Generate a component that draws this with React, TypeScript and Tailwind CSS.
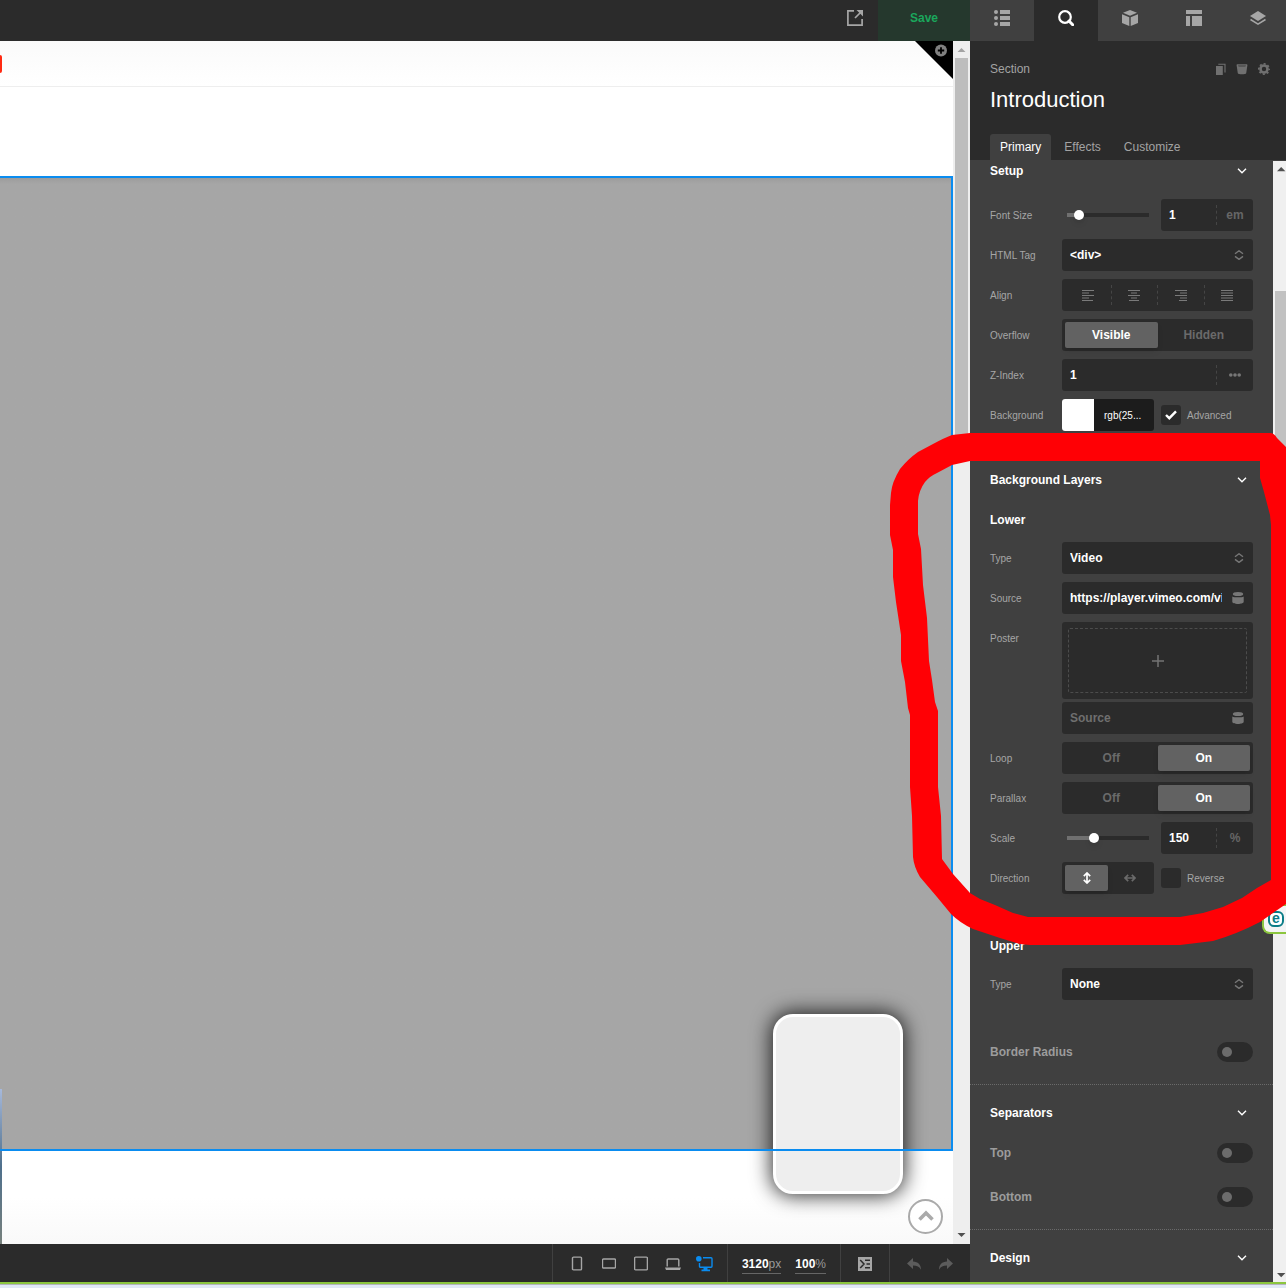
import React, { useState } from 'react';
import clsx from 'clsx';

interface RowProps {
  label: string;
  htmlFor?: string;
  children: React.ReactNode;
}

const Row: React.FC<RowProps> = ({ label, htmlFor, children }) => (
  <div className="flex items-start">
    <label htmlFor={htmlFor} className="flex h-8 w-[72px] shrink-0 items-center text-[10px] text-[#a6a6a6]">
      {label}
    </label>
    <div className="min-w-0 flex-1">{children}</div>
  </div>
);

const ChevronDown = () => (
  <svg width="10" height="6" viewBox="0 0 10 6" fill="none" stroke="#fff" strokeWidth="1.4">
    <path d="M1 0.8 5 4.8 9 0.8" />
  </svg>
);

const SectionHeader: React.FC<{ title: string }> = ({ title }) => (
  <button className="flex h-10 w-full items-center justify-between pr-[6px] text-xs font-bold text-white">
    <span>{title}</span>
    <ChevronDown />
  </button>
);

const SelectBox: React.FC<{ id: string; options: string[] }> = ({ id, options }) => (
  <div className="relative">
    <select id={id} className="h-8 w-full appearance-none rounded-[3px] bg-[#2b2b2b] pl-2 text-xs font-bold text-white outline-none">
      {options.map(option => (
        <option key={option}>{option}</option>
      ))}
    </select>
    <svg className="pointer-events-none absolute right-[9px] top-[11px]" width="10" height="10" viewBox="0 0 10 10" fill="none" stroke="#777" strokeWidth="1.4">
      <path d="M1 3.8 5 0.8 9 3.8M1 6.4 5 9.4 9 6.4" />
    </svg>
  </div>
);

interface SegmentedProps {
  name: string;
  options: React.ReactNode[];
  initial: number;
}

const Segmented: React.FC<SegmentedProps> = ({ name, options, initial }) => {
  const [active, setActive] = useState(initial);
  return (
    <div role="group" aria-label={name} className="flex h-8 rounded-[3px] bg-[#2b2b2b] p-[3px]">
      {options.map((option, index) => (
        <button
          key={index}
          aria-pressed={index === active}
          aria-label={typeof option === 'string' ? option : `${name} ${index + 1}`}
          onClick={() => setActive(index)}
          className={clsx(
            'flex flex-1 items-center justify-center rounded-[2px] text-xs font-bold',
            index === active ? 'bg-[#626262] text-white shadow-md' : 'text-[#6a6a6a]'
          )}
        >
          {option}
        </button>
      ))}
    </div>
  );
};

interface SliderFieldProps {
  id: string;
  initial: number;
  text: string;
  unit: string;
}

const SliderField: React.FC<SliderFieldProps> = ({ id, initial, text, unit }) => {
  const [value, setValue] = useState(initial);
  return (
    <div className="grid grid-cols-2 gap-[7px]">
      <div className="flex h-8 items-center px-[5px]">
        <input
          type="range"
          aria-label={`${id} slider`}
          value={value}
          onChange={e => setValue(Number(e.target.value))}
          className="h-1 w-full appearance-none outline-none [&::-webkit-slider-thumb]:size-[10px] [&::-webkit-slider-thumb]:appearance-none [&::-webkit-slider-thumb]:rounded-full [&::-webkit-slider-thumb]:bg-white [&::-webkit-slider-thumb]:shadow-md"
          style={{ background: `linear-gradient(to right, #707070 ${value}%, #2b2b2b ${value}%)` }}
        />
      </div>
      <div className="flex h-8 items-center rounded-[3px] bg-[#2b2b2b]">
        <input id={id} defaultValue={text} className="w-0 flex-1 pl-2 text-xs font-bold text-white outline-none" />
        <span className="flex h-5 w-[37px] items-center justify-center border-l border-dashed border-[#454545] text-xs font-bold text-[#666666]">
          {unit}
        </span>
      </div>
    </div>
  );
};

const DatabaseIcon = () => (
  <svg width="12" height="12" viewBox="0 0 12 12" fill="#777">
    <ellipse cx="6" cy="2" rx="5.2" ry="2" />
    <path d="M.3 4.4C2 5.6 10 5.6 11.7 4.4V9.8C11.7 12.7.3 12.7.3 9.8Z" />
  </svg>
);

const SourceInput: React.FC<{ id: string; value?: string }> = ({ id, value }) => (
  <div className="flex h-8 items-center rounded-[3px] bg-[#2b2b2b] px-2">
    <input
      id={id}
      aria-label="Source"
      defaultValue={value}
      placeholder="Source"
      className="w-0 flex-1 text-xs font-bold text-white outline-none placeholder:text-[#6f6f6f]"
    />
    <button aria-label="Dynamic content" className="ml-[10px] mr-[1px]">
      <DatabaseIcon />
    </button>
  </div>
);

const ToggleRow: React.FC<{ label: string; id: string }> = ({ label, id }) => (
  <div className="flex h-10 items-center justify-between text-xs font-bold text-[#9c9c9c]">
    <label htmlFor={id}>{label}</label>
    <input
      id={id}
      type="checkbox"
      role="switch"
      className="flex h-5 w-9 appearance-none items-center rounded-full bg-[#2b2b2b] px-[5px] before:size-[10px] before:rounded-full before:bg-[#6c6c6c] checked:justify-end"
    />
  </div>
);

const CheckField: React.FC<{ label: string; id: string; checked?: boolean }> = ({ label, id, checked }) => {
  const [on, setOn] = useState(!!checked);
  return (
    <div className="flex h-8 items-center gap-[6px] text-[10px] text-[#a6a6a6]">
      <div className="relative size-5">
        <input id={id} type="checkbox" checked={on} onChange={() => setOn(!on)} className="block size-5 appearance-none rounded-[3px] bg-[#2b2b2b]" />
        {on && (
          <svg className="pointer-events-none absolute left-1 top-[5px]" width="12" height="10" viewBox="0 0 12 10" fill="none" stroke="#fff" strokeWidth="2.4">
            <path d="M1 5 4.3 8.2 11 1.4" />
          </svg>
        )}
      </div>
      <label htmlFor={id}>{label}</label>
    </div>
  );
};

const alignLines = [
  ['Left', 'M0 .5H12M0 3H7M0 5.5H12M0 8H7M0 10.5H11'],
  ['Center', 'M0 .5H12M3 3H9M0 5.5H12M3 8H9M1 10.5H11'],
  ['Right', 'M0 .5H12M5 3H12M0 5.5H12M5 8H12M4 10.5H12'],
  ['Justify', 'M0 .5H12M0 3H12M0 5.5H12M0 8H12M0 10.5H12'],
];

const AlignGroup = () => (
  <div role="group" aria-label="Align" className="flex h-8 items-center rounded-[3px] bg-[#2b2b2b] px-[3px]">
    {alignLines.map(([name, d], index) => (
      <button
        key={name}
        aria-label={name}
        className={clsx('flex h-5 flex-1 items-center justify-center', index > 0 && 'border-l border-dashed border-[#454545]')}
      >
        <svg width="12" height="11" viewBox="0 0 12 11" stroke="#7a7a7a">
          <path d={d} />
        </svg>
      </button>
    ))}
  </div>
);

const panelTabs = [
  {
    name: 'Outline',
    icon: (
      <>
        <circle cx="2" cy="2" r="2" />
        <circle cx="2" cy="8" r="2" />
        <circle cx="2" cy="14" r="2" />
        <path d="M6 0h10v4H6zM6 6h10v4H6zM6 12h10v4H6z" />
      </>
    ),
  },
  {
    name: 'Inspector',
    icon: (
      <>
        <circle cx="7" cy="7" r="5.8" fill="none" stroke="currentColor" strokeWidth="2.2" />
        <path d="m11 11 3.7 3.7" stroke="currentColor" strokeWidth="3" strokeLinecap="round" />
      </>
    ),
  },
  {
    name: 'Elements',
    icon: <path d="M8 0 15 2.7 8 5.7 1 2.7ZM0 4.2 7.3 7.2V16L0 13ZM16 4.2 8.7 7.2V16L16 13Z" />,
  },
  {
    name: 'Layout',
    icon: <path d="M0 0h16v4H0zM0 6h4v10H0zM6 6h10v10H6z" />,
  },
  {
    name: 'Layers',
    icon: (
      <>
        <path d="M8 1 16 6 8 11 0 6Z" />
        <path d="M.5 9.5 8 14.2l7.5-4.7" fill="none" stroke="currentColor" strokeWidth="1.5" />
      </>
    ),
  },
];

const deviceIcons = [
  ['Phone', 'M3.5 1.1h7a1 1 0 0 1 1 1v10.8a1 1 0 0 1-1 1h-7a1 1 0 0 1-1-1V2.1a1 1 0 0 1 1-1Z'],
  ['Phone landscape', 'M1.5 3h11a1 1 0 0 1 1 1v7a1 1 0 0 1-1 1h-11a1 1 0 0 1-1-1V4a1 1 0 0 1 1-1Z'],
  ['Tablet', 'M1.6 1.1h10.8a1 1 0 0 1 1 1v10.8a1 1 0 0 1-1 1H1.6a1 1 0 0 1-1-1V2.1a1 1 0 0 1 1-1Z'],
];

const Inspector = () => (
  <aside className="flex w-[316px] shrink-0 flex-col overflow-hidden bg-[#404040]">
    <nav className="flex h-[41px] shrink-0 bg-[#404040]">
      {panelTabs.map((tab, index) => (
        <button
          key={tab.name}
          aria-label={tab.name}
          className={clsx('flex w-16 shrink-0 justify-center pt-[10px]', index === 1 ? 'bg-[#2b2b2b] text-white' : 'text-[#a6a6a6]')}
        >
          <svg width="16" height="16" viewBox="0 0 16 16" fill="currentColor">
            {tab.icon}
          </svg>
        </button>
      ))}
    </nav>
    <header className="flex h-[119px] shrink-0 flex-col bg-[#2b2b2b] px-5 pt-5">
      <div className="flex h-4 items-center justify-between text-xs text-[#a3a3a3]">
        <span>Section</span>
        <div className="-mr-1 flex items-center gap-[10px]">
          <button aria-label="Duplicate">
            <svg width="11" height="12" viewBox="0 0 11 12" fill="#707070">
              <path d="M1 3h6.8v9H1z" />
              <path d="M3.3 1.2h6.7V9.5" fill="none" stroke="#707070" strokeWidth="1.1" />
            </svg>
          </button>
          <button aria-label="Delete">
            <svg width="12" height="12" viewBox="0 0 12 12" fill="#707070">
              <path d="M1 1.2h10q.5.3.4 1L10.2 10.2C10 11.6 2 11.6 1.8 10.2L.6 2.2q-.1-.7.4-1Z" />
              <path d="M2 2.4h8L9.4 3.5H2.6Z" fill="#3c3c3c" />
            </svg>
          </button>
          <button aria-label="Settings">
            <svg width="12" height="12" viewBox="0 0 12 12" fill="none" stroke="#707070">
              <circle cx="6" cy="6" r="3.5" strokeWidth="2.6" />
              <circle cx="6" cy="6" r="5.2" strokeWidth="1.6" strokeDasharray="2.04 2.04" strokeDashoffset="1" />
            </svg>
          </button>
        </div>
      </div>
      <h1 className="mt-[9px] text-[22px] leading-[28px] text-white">Introduction</h1>
      <div role="tablist" className="mt-auto flex h-[26px] text-xs text-[#a3a3a3]">
        <button role="tab" aria-selected="true" className="rounded-t-[3px] bg-[#404040] px-[10px] text-white">Primary</button>
        <button role="tab" aria-selected="false" className="ml-[3px] px-[10px]">Effects</button>
        <button role="tab" aria-selected="false" className="ml-[3px] px-[10px]">Customize</button>
      </div>
    </header>

    <div className="flex flex-1">
      <div className="w-[303px]">
        <section className="px-5 pb-5">
          <button className="flex h-[22px] w-full items-center justify-between pr-[6px] text-xs font-bold text-white">
            <span>Setup</span>
            <ChevronDown />
          </button>
          <div className="mt-[17px] flex flex-col gap-2">
            <Row label="Font Size" htmlFor="font-size">
              <SliderField id="font-size" initial={10} text="1" unit="em" />
            </Row>
            <Row label="HTML Tag" htmlFor="html-tag">
              <SelectBox id="html-tag" options={['<div>', '<section>']} />
            </Row>
            <Row label="Align">
              <AlignGroup />
            </Row>
            <Row label="Overflow">
              <Segmented name="Overflow" options={['Visible', 'Hidden']} initial={0} />
            </Row>
            <Row label="Z-Index" htmlFor="z-index">
              <div className="flex h-8 items-center rounded-[3px] bg-[#2b2b2b]">
                <input id="z-index" defaultValue="1" className="w-0 flex-1 pl-2 text-xs font-bold text-white outline-none" />
                <button aria-label="More" className="flex h-5 w-[37px] items-center justify-center border-l border-dashed border-[#454545]">
                  <svg width="12" height="4" viewBox="0 0 12 4" fill="#777">
                    <circle cx="1.8" cy="2" r="1.8" />
                    <circle cx="6" cy="2" r="1.8" />
                    <circle cx="10.2" cy="2" r="1.8" />
                  </svg>
                </button>
              </div>
            </Row>
            <Row label="Background">
              <div className="grid grid-cols-2 gap-[7px]">
                <button className="flex h-8 items-center overflow-hidden rounded-[3px] bg-[#1c1c1c] text-[10px] text-white">
                  <span className="size-8 bg-white" />
                  <span className="pl-[10px]">rgb(25...</span>
                </button>
                <CheckField id="advanced" label="Advanced" checked />
              </div>
            </Row>
          </div>
        </section>

        <section className="border-t border-dotted border-[#6a6a6a] px-5 pb-3 pt-2">
          <SectionHeader title="Background Layers" />
          <h2 className="flex h-10 items-center text-xs font-bold text-white">Lower</h2>
          <div className="mt-[2px] flex flex-col gap-2">
            <Row label="Type" htmlFor="lower-type">
              <SelectBox id="lower-type" options={['Video', 'Image', 'Color', 'None']} />
            </Row>
            <Row label="Source" htmlFor="lower-source">
              <SourceInput id="lower-source" value="https://player.vimeo.com/video" />
            </Row>
            <Row label="Poster" htmlFor="poster-source">
              <div className="flex flex-col gap-[3px]">
                <div className="h-[77px] rounded-[3px] bg-[#2b2b2b] p-[6px]">
                  <button aria-label="Add poster" className="flex size-full items-center justify-center rounded-[2px] border border-dashed border-[#4c4c4c]">
                    <svg width="12" height="12" viewBox="0 0 12 12" stroke="#747474" strokeWidth="1.5">
                      <path d="M6 0V12M0 6H12" />
                    </svg>
                  </button>
                </div>
                <SourceInput id="poster-source" />
              </div>
            </Row>
            <Row label="Loop">
              <Segmented name="Loop" options={['Off', 'On']} initial={1} />
            </Row>
            <Row label="Parallax">
              <Segmented name="Parallax" options={['Off', 'On']} initial={1} />
            </Row>
            <Row label="Scale" htmlFor="scale">
              <SliderField id="scale" initial={31} text="150" unit="%" />
            </Row>
            <Row label="Direction">
              <div className="grid grid-cols-2 gap-[7px]">
                <Segmented
                  name="Direction"
                  initial={0}
                  options={[
                    <svg key="v" width="12" height="12" viewBox="0 0 12 12" fill="none" stroke="currentColor" strokeWidth="1.7">
                      <path d="M6 1.5v9M2.8 4.2 6 1l3.2 3.2M2.8 7.8 6 11l3.2-3.2" />
                    </svg>,
                    <svg key="h" width="12" height="12" viewBox="0 0 12 12" fill="none" stroke="currentColor" strokeWidth="1.7">
                      <path d="M1.5 6h9M4.2 2.8 1 6l3.2 3.2M7.8 2.8 11 6 7.8 9.2" />
                    </svg>,
                  ]}
                />
                <CheckField id="reverse" label="Reverse" />
              </div>
            </Row>
          </div>
          <h2 className="mt-8 flex h-10 items-center text-xs font-bold text-white">Upper</h2>
          <div className="mb-8 mt-[2px]">
            <Row label="Type" htmlFor="upper-type">
              <SelectBox id="upper-type" options={['None', 'Video', 'Image', 'Color']} />
            </Row>
          </div>
          <ToggleRow id="border-radius" label="Border Radius" />
        </section>

        <section className="border-t border-dotted border-[#6a6a6a] px-5 pb-3 pt-2">
          <SectionHeader title="Separators" />
          <div className="flex flex-col gap-1">
            <ToggleRow id="separator-top" label="Top" />
            <ToggleRow id="separator-bottom" label="Bottom" />
          </div>
        </section>

        <section className="border-t border-dotted border-[#6a6a6a] px-5 pb-1 pt-2">
          <SectionHeader title="Design" />
        </section>
      </div>

      <div className="mt-[1px] flex flex-1 flex-col justify-between bg-[#f0f0f0]">
        <div className="flex h-[640px] flex-col">
          <svg className="ml-1" width="9" height="17" viewBox="0 0 9 17" fill="#505050">
            <path d="M4.2 6 8.4 10.2H0Z" />
          </svg>
          <div className="ml-[2px] mt-[113px] flex-1 bg-[#c1c1c1]" />
        </div>
        <svg className="ml-1" width="9" height="17" viewBox="0 0 9 17" fill="#505050">
          <path d="M0 8h8.4L4.2 12.2Z" />
        </svg>
      </div>
    </div>
  </aside>
);

const Preview = () => (
  <div className="flex flex-1">
    <div className="relative flex flex-1 flex-col overflow-hidden bg-white">
      <div className="flex h-[46px] items-center border-b border-[#eeeeee] bg-linear-to-b from-[#fafafa] to-white">
        <div className="h-[18px] w-[2px] rounded-r-full bg-[#ff2a12]" />
      </div>
      <div className="mt-[89px] flex-1 border-y-2 border-r-2 border-[#0a8cf0] bg-linear-to-b from-[#9c9c9c] to-[#a6a6a6] to-[6px]" />
      <div className="h-[93px] bg-linear-to-b from-white via-white to-[#f9f9f9]" />

      {/* floating page content */}
      <div className="absolute bottom-0 left-0 h-[155px] w-[2px] bg-linear-to-b from-[#a6b9dc] via-[#4f708c] to-[#76807c]" />
      <div className="absolute bottom-[50px] right-[50px] h-[180px] w-[130px] rounded-[20px] border-3 border-white bg-[#eeeeee] shadow-[0_0_20px_2px_rgba(0,0,0,0.8)]" />
      <div className="absolute bottom-[93px] left-0 right-0 h-[2px] bg-[#0a8cf0]" />
      <button aria-label="Back to top" className="absolute bottom-[10px] right-[10px] flex size-[35px] items-center justify-center rounded-full border-2 border-[#aaaaaa] bg-white pb-[2px]">
        <svg width="16" height="12" viewBox="0 0 16 12" fill="none" stroke="#aaa" strokeWidth="3.6">
          <path d="M1.5 9.5 8 3 14.5 9.5" />
        </svg>
      </button>
      <button aria-label="Add" className="absolute right-0 top-0">
        <svg width="38" height="38" viewBox="0 0 38 38">
          <path d="M0 0H38V38Z" />
          <circle cx="26" cy="9.5" r="6" fill="#808080" />
          <path d="M26 6.3v6.4M22.8 9.5h6.4" stroke="#000" strokeWidth="1.8" />
        </svg>
      </button>
    </div>
    <div className="flex w-[17px] flex-col items-center bg-[#eeeeee]">
      <svg width="17" height="17" viewBox="0 0 17 17" fill="#a3a3a3">
        <path d="M8.5 7 12.5 11H4.5Z" />
      </svg>
      <div className="h-[387px] w-[13px] bg-[#bdbdbd]" />
      <svg className="mt-auto" width="17" height="17" viewBox="0 0 17 17" fill="#505050">
        <path d="M4.5 6h8L8.5 10Z" />
      </svg>
    </div>
  </div>
);

const BottomBar = () => (
  <footer className="flex h-[38px] shrink-0 justify-end bg-[#2b2b2b] text-xs">
    <div className="flex items-center gap-[18px] border-l border-[#404040] pl-[17px] pr-4 pt-[1px] text-[#a6a6a6]">
      {deviceIcons.map(([name, d]) => (
        <button key={name} aria-label={name}>
          <svg width="14" height="15" viewBox="0 0 14 15" fill="none" stroke="currentColor" strokeWidth="1.4">
            <path d={d} />
          </svg>
        </button>
      ))}
      <button aria-label="Laptop" className="-mx-[1px]">
        <svg width="16" height="14" viewBox="0 0 16 14" fill="none" stroke="currentColor" strokeWidth="1.4">
          <path d="M2.2 9.5V3a1 1 0 0 1 1-1h9.6a1 1 0 0 1 1 1v6.5" />
          <path d="M0 10.5h16l-1 2.5H1Z" fill="currentColor" stroke="none" />
        </svg>
      </button>
      <button aria-label="Desktop" className="-mx-[2px] text-[#0a8cf0]">
        <svg width="17" height="16" viewBox="0 0 17 16" fill="none" stroke="currentColor" strokeWidth="1.4">
          <circle cx="2.8" cy="2.8" r="2.8" fill="currentColor" stroke="none" />
          <path d="M7 1.7h8a1 1 0 0 1 1 1v7.6a1 1 0 0 1-1 1H4.5a1 1 0 0 1-1-1V7" />
          <path d="M7.5 11.5h4v2h2.5v1.8H5.5v-1.8h2Z" fill="currentColor" stroke="none" />
        </svg>
      </button>
    </div>
    <div className="flex items-center gap-[14px] border-l border-[#404040] px-[14px] text-[#9a9a9a]">
      <button className="border-b border-[#666666] pt-[2px] leading-[18px]">
        <b className="text-white">3120</b>px
      </button>
      <button className="border-b border-[#666666] pt-[2px] leading-[18px]">
        <b className="text-white">100</b>%
      </button>
    </div>
    <div className="flex items-center border-l border-[#404040] px-[17px] pt-[2px]">
      <button aria-label="Code">
        <svg width="14" height="14" viewBox="0 0 14 14" fill="none" stroke="#2b2b2b" strokeWidth="1.5">
          <path d="M0 0h14v14H0z" fill="#a6a6a6" stroke="none" />
          <path d="M2.2 3 6 7l-3.8 4M7 3.2H12M8.5 7H12M7 10.8H12" />
        </svg>
      </button>
    </div>
    <div className="flex items-center gap-[18px] border-l border-[#404040] px-[17px] pt-[2px] text-[#5c5c5c]">
      <button aria-label="Undo">
        <svg width="14" height="12" viewBox="0 0 14 12" fill="currentColor">
          <path d="M6 0v3.4c5 .2 8 3 8 8.4-1.5-3-4-4.2-8-4.2V11L0 5.5Z" />
        </svg>
      </button>
      <button aria-label="Redo">
        <svg width="14" height="12" viewBox="0 0 14 12" fill="currentColor">
          <path d="M8 0v3.4c-5 .2-8 3-8 8.4 1.5-3 4-4.2 8-4.2V11l6-5.5Z" />
        </svg>
      </button>
    </div>
  </footer>
);

// Freehand marker loop drawn around the Background Layers section
const Marker = () => (
  <svg className="pointer-events-none absolute right-0 top-[430px]" width="400" height="520" viewBox="886 430 400 520" fill="#ff0005">
    <path
      fillRule="evenodd"
      d="M1270 433H970L952 435Q944 438 933 444L918 452Q908 459 900 469 892 482 891 493L890 505V535L893 550V577L896 602 901 635V661L905 682 908 708 910 715V787L912 816 913 857Q914 867 920 877L937 897 951 914Q960 923 973 929L1000 938 1020 944 1030 945H1180L1213 941Q1237 934 1260 922L1286 904V447L1277 438Q1274 433 1270 433ZM1260 461V478L1264 492 1270 515 1271 525V880L1257 888 1242 898 1223 907 1203 913 1180 917H1028L1013 913 995 905 980 899 970 893 953 874 942 859 941 816 938 787V711L935 702 932 680 929 661 927 618 923 585 921 549 918 534V501Q919 490 925 482 930 476 937 473L952 465 970 461Z"
    />
  </svg>
);

const App = () => (
  <div className="relative flex min-h-screen flex-col overflow-hidden bg-[#e1e9f6] font-['Liberation_Sans',Arial,sans-serif]">
    <div className="flex flex-1">
      <main className="flex min-w-0 flex-1 flex-col">
        <header className="flex h-[41px] shrink-0 justify-end bg-[#2b2b2b]">
          <button aria-label="Open in new tab" className="mr-[15px] pb-[5px]">
            <svg width="16" height="16" viewBox="0 0 16 16" fill="none" stroke="#a6a6a6" strokeWidth="1.7">
              <path d="M7 .9H.9v14.2h14.2V9M8 8l5.5-5.5" />
              <path d="M9.5 0H16v6.5Z" fill="#a6a6a6" stroke="none" />
            </svg>
          </button>
          <button className="w-[92px] bg-[#25382d] pb-[5px] text-xs font-bold text-[#1aa75c]">Save</button>
        </header>
        <Preview />
        <BottomBar />
      </main>
      <Inspector />
    </div>
    <div className="h-[6px] shrink-0 border-t-2 border-[#8cc63f]">
      <div className="h-[1px] bg-[#b4b4c0]" />
    </div>
    <a href="#e" aria-label="e" className="absolute right-0 top-[904px] flex h-[30px] w-6 items-center justify-end rounded-l-[8px] border-2 border-r-0 border-[#8cc63f] bg-[#f4f4f4] pr-[2px]">
      <span className="flex size-4 items-center justify-center rounded-[6px] border-2 border-[#0b7d87] bg-white pb-[2px] text-sm font-bold leading-none text-[#0b7d87]">e</span>
    </a>
    <Marker />
  </div>
);

export default App;
